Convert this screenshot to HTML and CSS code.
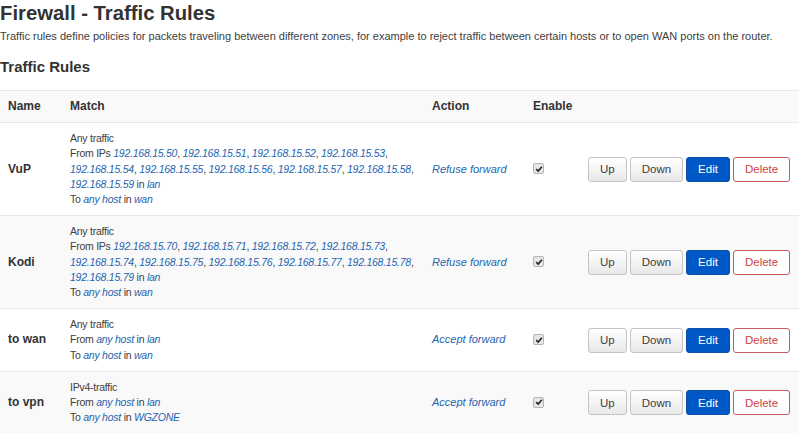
FILE: index.html
```html
<!DOCTYPE html>
<html lang="en">
<head>
    <meta charset="UTF-8">
    <title>Firewall - Traffic Rules</title>
    <link rel="stylesheet" href="styles.css">
</head>
<body>
    <h2>Firewall - Traffic Rules</h2>
    <div class="cbi-map-descr">Traffic rules define policies for packets traveling between different zones, for example to reject traffic between certain hosts or to open WAN ports on the router.</div>

    <h3>Traffic Rules</h3>
    <table class="cbi-section-table">
        <tr class="table-titles">
            <th class="col-name">Name</th>
            <th class="col-match">Match</th>
            <th class="col-action">Action</th>
            <th class="col-enable">Enable</th>
            <th class="col-buttons"></th>
        </tr>
        <tr class="row-1">
            <td class="rule-name">VuP</td>
            <td class="rule-match">
                Any traffic<br>
                From IPs <var>192.168.15.50</var>, <var>192.168.15.51</var>, <var>192.168.15.52</var>, <var>192.168.15.53</var>, <var>192.168.15.54</var>, <var>192.168.15.55</var>, <var>192.168.15.56</var>, <var>192.168.15.57</var>, <var>192.168.15.58</var>, <var>192.168.15.59</var> in <var>lan</var><br>
                To <var>any host</var> in <var>wan</var>
            </td>
            <td><var>Refuse forward</var></td>
            <td><span class="check"><svg viewBox="0 0 10 10" width="8" height="8"><path d="M1.5 5.2 L4 7.6 L8.6 2.2" fill="none" stroke="#222" stroke-width="2"/></svg></span></td>
            <td class="btns">
                <button class="btn">Up</button><button class="btn">Down</button><button class="btn btn-edit">Edit</button><button class="btn btn-del">Delete</button>
            </td>
        </tr>
        <tr class="row-2">
            <td class="rule-name">Kodi</td>
            <td class="rule-match">
                Any traffic<br>
                From IPs <var>192.168.15.70</var>, <var>192.168.15.71</var>, <var>192.168.15.72</var>, <var>192.168.15.73</var>, <var>192.168.15.74</var>, <var>192.168.15.75</var>, <var>192.168.15.76</var>, <var>192.168.15.77</var>, <var>192.168.15.78</var>, <var>192.168.15.79</var> in <var>lan</var><br>
                To <var>any host</var> in <var>wan</var>
            </td>
            <td><var>Refuse forward</var></td>
            <td><span class="check"><svg viewBox="0 0 10 10" width="8" height="8"><path d="M1.5 5.2 L4 7.6 L8.6 2.2" fill="none" stroke="#222" stroke-width="2"/></svg></span></td>
            <td class="btns">
                <button class="btn">Up</button><button class="btn">Down</button><button class="btn btn-edit">Edit</button><button class="btn btn-del">Delete</button>
            </td>
        </tr>
        <tr class="row-1">
            <td class="rule-name">to wan</td>
            <td class="rule-match">
                Any traffic<br>
                From <var>any host</var> in <var>lan</var><br>
                To <var>any host</var> in <var>wan</var>
            </td>
            <td><var>Accept forward</var></td>
            <td><span class="check"><svg viewBox="0 0 10 10" width="8" height="8"><path d="M1.5 5.2 L4 7.6 L8.6 2.2" fill="none" stroke="#222" stroke-width="2"/></svg></span></td>
            <td class="btns">
                <button class="btn">Up</button><button class="btn">Down</button><button class="btn btn-edit">Edit</button><button class="btn btn-del">Delete</button>
            </td>
        </tr>
        <tr class="row-2">
            <td class="rule-name">to vpn</td>
            <td class="rule-match">
                IPv4-traffic<br>
                From <var>any host</var> in <var>lan</var><br>
                To <var>any host</var> in <var>WGZONE</var>
            </td>
            <td><var>Accept forward</var></td>
            <td><span class="check"><svg viewBox="0 0 10 10" width="8" height="8"><path d="M1.5 5.2 L4 7.6 L8.6 2.2" fill="none" stroke="#222" stroke-width="2"/></svg></span></td>
            <td class="btns">
                <button class="btn">Up</button><button class="btn">Down</button><button class="btn btn-edit">Edit</button><button class="btn btn-del">Delete</button>
            </td>
        </tr>
    </table>
</body>
</html>
```
FILE: styles.css
```css
body {
    font-family: "Liberation Sans", Arial, sans-serif;
    font-size: 11px;
    color: #404040;
    margin: 0;
    background: #fff;
}
h2 {
    font-size: 20.3px;
    line-height: 26px;
    margin: 0;
    color: #333;
}
.cbi-map-descr {
    font-size: 11px;
    line-height: 16px;
    margin-top: 2px;
    color: #404040;
}
h3 {
    font-size: 15px;
    line-height: 22px;
    margin: 12px 0 12px 0;
    color: #333;
}
.cbi-section-table {
    width: 100%;
    border-collapse: collapse;
    table-layout: fixed;
}
.cbi-section-table th,
.cbi-section-table td {
    padding: 8px 8px;
    vertical-align: middle;
    text-align: left;
    border-top: 1px solid #e8e8e8;
    line-height: 15.2px;
}
.table-titles th {
    background: #f9f9f9;
    font-size: 12px;
    color: #333;
    height: 15px;
}
.col-name { width: 46px; }
.col-match { width: 346px; }
.col-action { width: 85px; }
.col-enable { width: 39px; }
.row-2 td {
    background: #f9f9f9;
}
.rule-name {
    font-weight: bold;
    font-size: 12px;
    color: #333;
}
.rule-match {
    font-size: 10.5px;
    letter-spacing: -0.25px;
}
var {
    color: #2465b0;
    font-style: italic;
}
.check {
    display: inline-block;
    width: 9px;
    height: 9px;
    border: 1px solid #b5b5b5;
    border-radius: 2px;
    background: #e6e6e6;
    vertical-align: middle;
    position: relative;
    top: -1px;
    line-height: 0;
    text-align: center;
}
.check svg {
    margin-top: 0.5px;
}
.btns {
    white-space: nowrap;
}
.btn {
    font-family: "Liberation Sans", Arial, sans-serif;
    font-size: 11.5px;
    height: 25px;
    padding: 0 11px;
    margin-right: 3px;
    border: 1px solid #c4c4c4;
    border-radius: 3px;
    background: linear-gradient(#fff, #e8e8e8);
    color: #404040;
}
.btn-edit {
    background: #0058c6;
    border-color: #0a4fa8;
    color: #fff;
}
.btn-del {
    background: #fff;
    border-color: #c85a5a;
    color: #c44;
}
```
